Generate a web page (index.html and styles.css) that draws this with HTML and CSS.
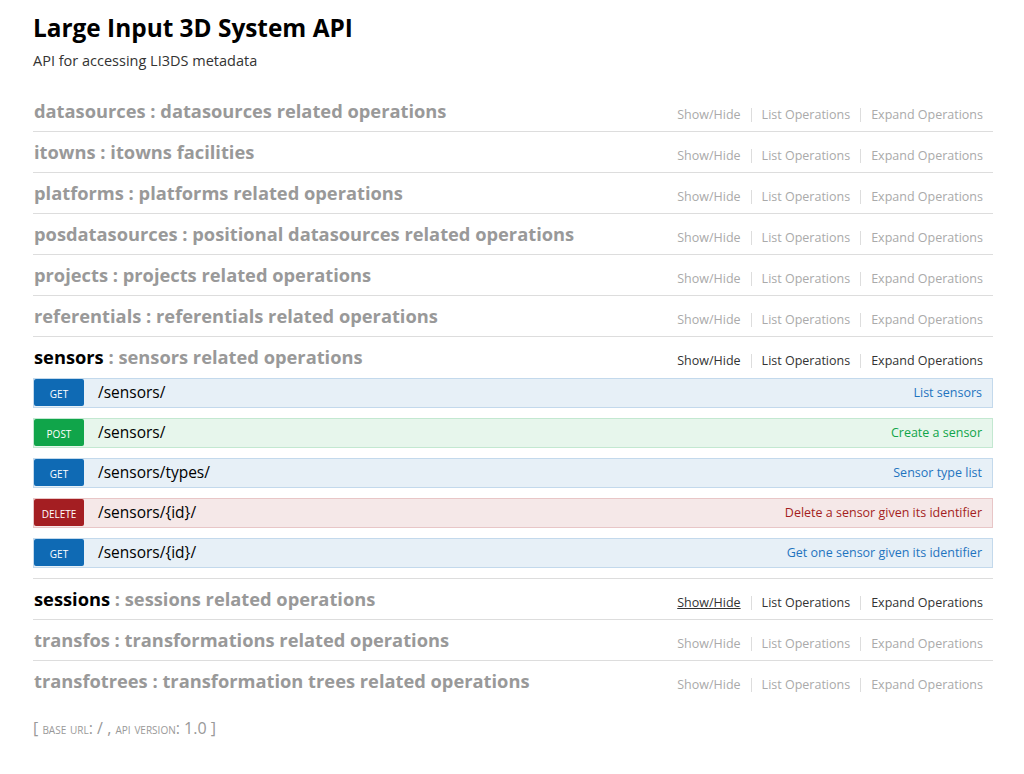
FILE: index.html
```html
<!DOCTYPE html>
<html>
<head>
<meta charset="utf-8">
<title>Large Input 3D System API</title>
<link rel="stylesheet" href="styles.css">
</head>
<body>
<div class="wrap">
  <div class="info">
    <h1 class="info-title">Large Input 3D System API</h1>
    <div class="info-desc">API for accessing LI3DS metadata</div>
  </div>
  <ul class="resources">
    <li class="resource">
      <div class="heading">
        <h2><span class="name">datasources</span> : datasources related operations</h2>
        <ul class="options"><li>Show/Hide</li><li>List Operations</li><li>Expand Operations</li></ul>
      </div>
    </li>
    <li class="resource">
      <div class="heading">
        <h2><span class="name">itowns</span> : itowns facilities</h2>
        <ul class="options"><li>Show/Hide</li><li>List Operations</li><li>Expand Operations</li></ul>
      </div>
    </li>
    <li class="resource">
      <div class="heading">
        <h2><span class="name">platforms</span> : platforms related operations</h2>
        <ul class="options"><li>Show/Hide</li><li>List Operations</li><li>Expand Operations</li></ul>
      </div>
    </li>
    <li class="resource">
      <div class="heading">
        <h2><span class="name">posdatasources</span> : positional datasources related operations</h2>
        <ul class="options"><li>Show/Hide</li><li>List Operations</li><li>Expand Operations</li></ul>
      </div>
    </li>
    <li class="resource">
      <div class="heading">
        <h2><span class="name">projects</span> : projects related operations</h2>
        <ul class="options"><li>Show/Hide</li><li>List Operations</li><li>Expand Operations</li></ul>
      </div>
    </li>
    <li class="resource">
      <div class="heading">
        <h2><span class="name">referentials</span> : referentials related operations</h2>
        <ul class="options"><li>Show/Hide</li><li>List Operations</li><li>Expand Operations</li></ul>
      </div>
    </li>
    <li class="resource active open">
      <div class="heading">
        <h2><span class="name">sensors</span> : sensors related operations</h2>
        <ul class="options"><li>Show/Hide</li><li>List Operations</li><li>Expand Operations</li></ul>
      </div>
      <ul class="operations">
        <li class="operation get">
          <span class="method">GET</span><span class="path">/sensors/</span>
          <span class="summary">List sensors</span>
        </li>
        <li class="operation post">
          <span class="method">POST</span><span class="path">/sensors/</span>
          <span class="summary">Create a sensor</span>
        </li>
        <li class="operation get">
          <span class="method">GET</span><span class="path">/sensors/types/</span>
          <span class="summary">Sensor type list</span>
        </li>
        <li class="operation delete">
          <span class="method">DELETE</span><span class="path">/sensors/{id}/</span>
          <span class="summary">Delete a sensor given its identifier</span>
        </li>
        <li class="operation get">
          <span class="method">GET</span><span class="path">/sensors/{id}/</span>
          <span class="summary">Get one sensor given its identifier</span>
        </li>
      </ul>
    </li>
    <li class="resource active">
      <div class="heading">
        <h2><span class="name">sessions</span> : sessions related operations</h2>
        <ul class="options"><li class="hover">Show/Hide</li><li>List Operations</li><li>Expand Operations</li></ul>
      </div>
    </li>
    <li class="resource">
      <div class="heading">
        <h2><span class="name">transfos</span> : transformations related operations</h2>
        <ul class="options"><li>Show/Hide</li><li>List Operations</li><li>Expand Operations</li></ul>
      </div>
    </li>
    <li class="resource">
      <div class="heading">
        <h2><span class="name">transfotrees</span> : transformation trees related operations</h2>
        <ul class="options"><li>Show/Hide</li><li>List Operations</li><li>Expand Operations</li></ul>
      </div>
    </li>
  </ul>
  <div class="footer">
    [ <span class="sc">base url</span>: / , <span class="sc">api version</span>: <span class="ver">1.0</span> ]
  </div>
</div>
</body>
</html>
```

FILE: styles.css
```css
html, body {
  margin: 0;
  padding: 0;
  background: #fff;
}
body {
  font-family: "Open Sans", "DejaVu Sans", sans-serif;
  color: #333;
}
.wrap {
  width: 960px;
  margin-left: 33px;
}
.info {
  padding-top: 11px;
}
.info-title {
  margin: 0;
  font-size: 24.4px;
  line-height: 34px;
  font-weight: bold;
  color: #000;
}
.info-desc {
  margin-top: 7px;
  font-size: 14.5px;
  line-height: 18px;
  color: #333;
}
.resources {
  list-style: none;
  margin: 21px 0 0;
  padding: 0;
}
.resource .heading {
  display: flex;
  justify-content: space-between;
  align-items: center;
  padding: 10px 0;
  height: 20px;
  border-bottom: 1px solid #ddd;
}
.resource.open .heading,
.resource:last-child .heading {
  border-bottom-color: transparent;
}
.heading h2 {
  margin: 0;
  font-size: 18.3px;
  line-height: 20px;
  font-weight: bold;
  color: #999;
  padding-left: 1px;
}
.resource.active .heading h2 .name {
  color: #000;
}
.options {
  list-style: none;
  margin: 7px 0 0;
  padding: 0;
  display: flex;
}
.options li {
  font-size: 12.5px;
  line-height: 14px;
  color: #aaa;
  padding: 0 10px;
  border-left: 1px solid #ddd;
}
.options li:first-child {
  border-left: none;
}
.resource.active .options li {
  color: #333;
}
.options li.hover {
  text-decoration: underline;
  color: #000;
}
.operations {
  list-style: none;
  margin: 0;
  padding: 0 0 10px;
  border-bottom: 1px solid #ddd;
}
.operation {
  display: flex;
  align-items: center;
  height: 28px;
  margin-bottom: 10px;
  border: 1px solid #ddd;
}
.operation:last-child {
  margin-bottom: 0;
}
.operation .method {
  align-self: flex-start;
  width: 50px;
  height: 27px;
  line-height: 30px;
  text-align: center;
  font-size: 10px;
  color: #fff;
  border-radius: 2px;
}
.operation .path {
  padding-left: 14px;
  margin-bottom: 2px;
  font-size: 15.5px;
  line-height: 26px;
  color: #000;
}
.operation .summary {
  margin-left: auto;
  margin-right: 10px;
  font-size: 12.5px;
  line-height: 26px;
}
.operation.get {
  background: #e7f0f7;
  border-color: #c3d9ec;
}
.operation.get .method {
  background: #0f6ab4;
}
.operation.get .summary {
  color: #1f74bf;
}
.operation.post {
  background: #e7f6ec;
  border-color: #c3e8d1;
}
.operation.post .method {
  background: #10a54a;
}
.operation.post .summary {
  color: #10a54a;
}
.operation.delete {
  background: #f5e8e8;
  border-color: #e8c6c7;
}
.operation.delete .method {
  background: #a41e22;
}
.operation.delete .summary {
  color: #a41e22;
}
.footer {
  margin-top: 15px;
  font-size: 16px;
  color: #999;
}
.footer .sc {
  font-variant: small-caps;
  font-size: 14.8px;
}
```
